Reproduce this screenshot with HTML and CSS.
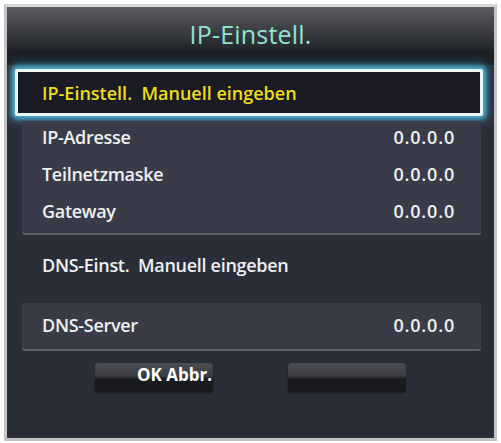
FILE: index.html
```html
<!DOCTYPE html>
<html>
<head>
<meta charset="utf-8">
<link rel="stylesheet" href="styles.css">
</head>
<body>
<div class="dialog">
  <div class="header">
    <div class="title">IP-Einstell.</div>
  </div>
  <div class="selected">
    <span>IP-Einstell.&nbsp; Manuell eingeben</span>
  </div>
  <div class="group">
    <div class="row"><span>IP-Adresse</span><span class="val">0.0.0.0</span></div>
    <div class="row"><span>Teilnetzmaske</span><span class="val">0.0.0.0</span></div>
    <div class="row"><span>Gateway</span><span class="val">0.0.0.0</span></div>
  </div>
  <div class="dns">DNS-Einst.&nbsp; Manuell eingeben</div>
  <div class="group single">
    <div class="row"><span>DNS-Server</span><span class="val">0.0.0.0</span></div>
  </div>
  <div class="buttons">
    <div class="btn ok">OK Abbr.</div>
    <div class="btn"></div>
  </div>
</div>
</body>
</html>
```
FILE: styles.css
```css
html, body {
  margin: 0;
  padding: 0;
  background: #ffffff;
}
body {
  font-family: "Open Sans", "DejaVu Sans", sans-serif;
  width: 501px;
  height: 443px;
  overflow: hidden;
}
.dialog {
  box-sizing: border-box;
  margin: 4px 0 0 4px;
  width: 493px;
  height: 437px;
  border: 3px solid #c4c4c6;
  border-top-color: #d8d8d8;
  background: #2a2e38;
  display: flex;
  flex-direction: column;
  overflow: hidden;
}
.header {
  height: 58px;
  flex: none;
  background: linear-gradient(#5a5c60 0%, #3c3e43 40%, #1d2026 80%, #1b1e25 100%);
  display: flex;
  justify-content: center;
  padding-top: 9px;
  box-sizing: border-box;
}
.title {
  color: #8fe3d2;
  font-size: 25px;
  line-height: 36px;
  letter-spacing: 0.2px;
}
.selected {
  flex: none;
  margin: 4px 11px 0 8px;
  height: 47px;
  box-sizing: border-box;
  border: 3px solid #e9f6f8;
  border-radius: 2px;
  background: #1b1b23;
  box-shadow: 0 0 5px 3px #4fb3cf, 0 0 12px 5px rgba(60, 150, 190, 0.5);
  display: flex;
  align-items: center;
  padding-left: 24px;
  color: #eedd1e;
  font-size: 18px;
  font-weight: 600;
  letter-spacing: 0;
}
.group {
  flex: none;
  margin: 5px 13px 0 15px;
  background: #393c48;
  border-bottom: 2px solid #5d606a;
  border-radius: 0 0 3px 3px;
  padding: 0 26px 5px 20px;
  display: flex;
  flex-direction: column;
  height: 114px;
  box-sizing: border-box;
  justify-content: center;
}
.row {
  display: flex;
  justify-content: space-between;
  color: #eef0f2;
  font-size: 18px;
  font-weight: 600;
  line-height: 37px;
  letter-spacing: -0.3px;
}
.val {
  letter-spacing: 0.8px;
}
.dns {
  flex: none;
  color: #eef0f2;
  font-size: 18px;
  font-weight: 600;
  letter-spacing: -0.3px;
  padding-left: 35px;
  height: 68px;
  line-height: 60px;
}
.group.single {
  margin-top: 0;
  height: 48px;
  padding-bottom: 2px;
  background: #393c47;
}
.buttons {
  flex: none;
  display: flex;
  gap: 75px;
  padding-left: 88px;
  margin-top: 12px;
}
.btn {
  width: 118px;
  height: 29px;
  border-radius: 4px 4px 2px 2px;
  background: linear-gradient(#4c4e54 0%, #3a3c41 45%, #1a1b1e 55%, #18191c 100%);
  box-shadow: 0 1px 2px rgba(0,0,0,0.4);
  box-sizing: border-box;
  color: #ffffff;
  font-size: 17px;
  font-weight: 700;
  text-align: right;
  padding-right: 1px;
  line-height: 24px;
}
```
